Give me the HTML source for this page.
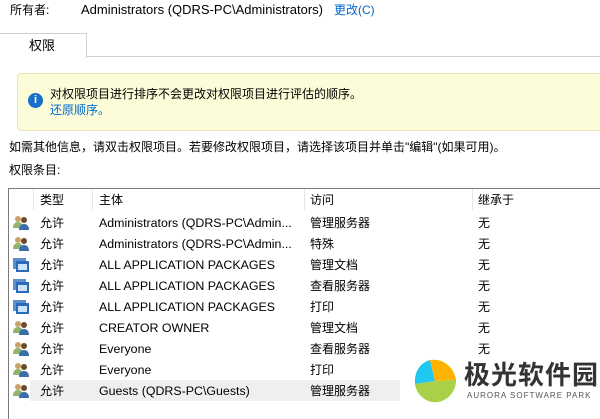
<!DOCTYPE html><html><head><meta charset="utf-8"><style>
body{margin:0;width:600px;height:406px;overflow:hidden;background:#fff;font-family:"Liberation Sans","Noto Sans CJK SC",sans-serif;font-size:12px;line-height:16px;color:#000;position:relative}
.a{position:absolute;white-space:nowrap}
.link{color:#0066cc}
.row{position:absolute;left:10px;width:590px;height:21px}
.row span{position:absolute;top:3px;line-height:16px}
.ic{position:absolute;left:3px;top:3px;width:16px;height:15px}
</style></head><body>
<div class="a" style="left:10px;top:2px">所有者:</div>
<div class="a" style="left:81px;top:2px;font-size:13px">Administrators (QDRS-PC\Administrators)</div>
<div class="a link" style="left:334px;top:2px">更改(C)</div>
<div class="a" style="left:0;top:33px;width:86px;height:24px;border:1px solid #d0d0d0;border-bottom:none;border-left:none;background:#fff"></div>
<div class="a" style="left:29px;top:38px;font-size:13px">权限</div>
<div class="a" style="left:86px;top:56px;width:514px;height:1px;background:#d0d0d0"></div>
<div class="a" style="left:17px;top:73px;width:590px;height:56px;background:#fcfcd8;border:1px solid #e6e6b8;border-radius:4px"></div>
<div class="a" style="left:28px;top:93px;width:15px;height:15px;border-radius:50%;background:#1a6fc9;color:#fff;font-size:11px;font-weight:bold;text-align:center;line-height:15px">i</div>
<div class="a" style="left:50px;top:86px">对权限项目进行排序不会更改对权限项目进行评估的顺序。</div>
<div class="a link" style="left:50px;top:102px">还原顺序。</div>
<div class="a" style="left:9px;top:139px">如需其他信息，请双击权限项目。若要修改权限项目，请选择该项目并单击"编辑"(如果可用)。</div>
<div class="a" style="left:9px;top:162px">权限条目:</div>
<div class="a" style="left:8px;top:188px;width:600px;height:230px;border-top:1px solid #7a7a7a;border-left:1px solid #7a7a7a"></div>
<div class="a" style="left:33px;top:189px;width:1px;height:21px;background:#e5e5e5"></div>
<div class="a" style="left:92px;top:189px;width:1px;height:21px;background:#e5e5e5"></div>
<div class="a" style="left:304px;top:189px;width:1px;height:21px;background:#e5e5e5"></div>
<div class="a" style="left:472px;top:189px;width:1px;height:21px;background:#e5e5e5"></div>
<div class="a" style="left:40px;top:192px">类型</div>
<div class="a" style="left:99px;top:192px">主体</div>
<div class="a" style="left:310px;top:192px">访问</div>
<div class="a" style="left:478px;top:192px">继承于</div>
<div class="a" style="left:30px;top:380px;width:370px;height:21px;background:#efefef"></div>
<div id="rows"></div>
<svg width="0" height="0" style="position:absolute"><defs>
<symbol id="u" viewBox="0 0 16 15"><circle cx="5" cy="4" r="3" fill="#c9a46a"/><path d="M0 13c0-4 2-6 5-6s5 2 5 6z" fill="#8fb56a"/><circle cx="11" cy="5" r="3" fill="#6b4a2a"/><path d="M6 15c0-4 2-6 5-6s5 2 5 6z" fill="#3a6ea8"/></symbol>
<symbol id="p" viewBox="0 0 16 15"><rect x="0" y="1" width="13" height="11" fill="#5a8fd0"/><rect x="3" y="4" width="13" height="11" fill="#2a6ab8"/><rect x="5" y="7" width="9" height="6" fill="#cfe3f8"/></symbol>
</defs></svg>
<script>
var d=[["u","Administrators (QDRS-PC\\Admin...","管理服务器"],["u","Administrators (QDRS-PC\\Admin...","特殊"],["p","ALL APPLICATION PACKAGES","管理文档"],["p","ALL APPLICATION PACKAGES","查看服务器"],["p","ALL APPLICATION PACKAGES","打印"],["u","CREATOR OWNER","管理文档"],["u","Everyone","查看服务器"],["u","Everyone","打印"],["u","Guests (QDRS-PC\\Guests)","管理服务器"]];
var h="";d.forEach(function(r,i){h+='<div class="row" style="top:'+(212+i*21)+'px"><svg class="ic"><use href="#'+r[0]+'"/></svg><span style="left:30px">允许</span><span style="left:89px;font-size:12.4px">'+r[1]+'</span><span style="left:300px">'+r[2]+'</span>'+(i<8?'<span style="left:468px">无</span>':'')+'</div>';});
document.getElementById("rows").innerHTML=h;
</script>
<div class="a" style="left:405px;top:356px;width:195px;height:50px;background:#fff"></div>
<svg class="a" style="left:412px;top:358px" width="46" height="46" viewBox="0 0 46 46"><path d="M23 23L18 2C8 5 2 14 3 26z" fill="#1ec8f0"/><path d="M23 23L18 2C30 0 42 8 44 22z" fill="#ffb300"/><path d="M23 23L44 22C44 36 32 46 20 44 10 42 4 34 3 26z" fill="#a8d048"/></svg>
<div class="a" style="left:464px;top:360px;font-size:26px;line-height:30px;font-weight:bold;color:#333;letter-spacing:1px">极光软件园</div>
<div class="a" style="left:467px;top:391px;font-size:8px;line-height:10px;color:#555;letter-spacing:1px">AURORA SOFTWARE PARK</div>
</body></html>
